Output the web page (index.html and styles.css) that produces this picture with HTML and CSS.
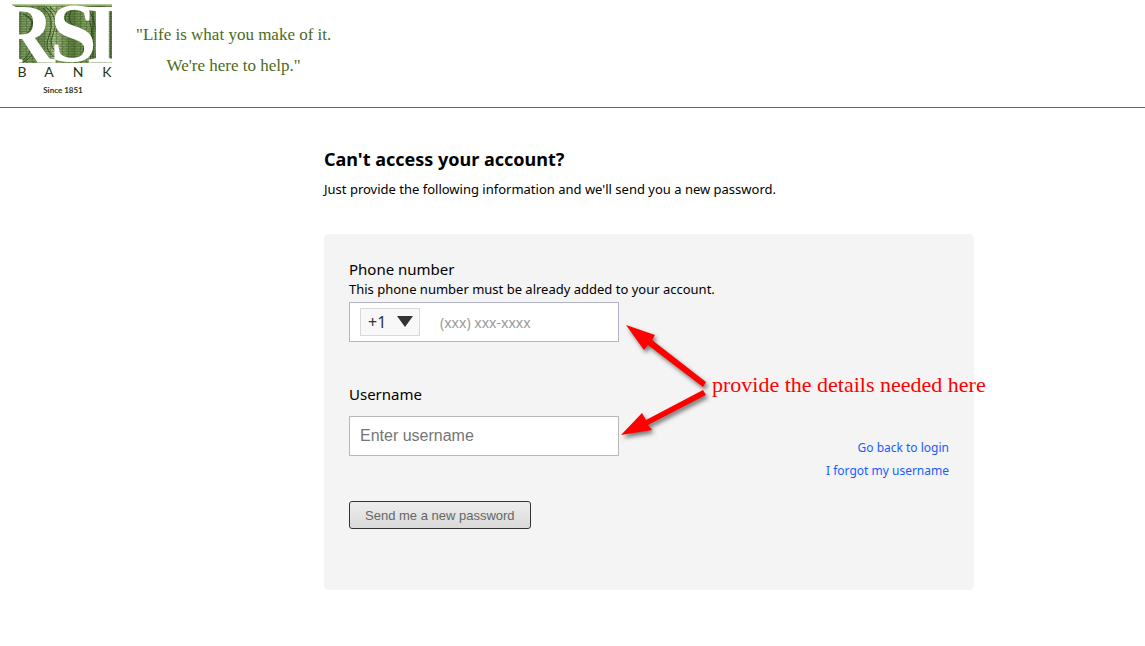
FILE: index.html
```html
<!DOCTYPE html>
<html lang="en">
<head>
<meta charset="utf-8">
<meta name="viewport" content="width=device-width, initial-scale=1">
<title>RSI Bank - Can't access your account?</title>
<link rel="stylesheet" href="styles.css">
</head>
<body>
<header class="site-header">
  <svg class="logo" viewBox="0 0 116 104" role="img" aria-label="RSI Bank, since 1851">
    <defs>
      <linearGradient id="green" x1="0" y1="0" x2="1" y2="0">
        <stop offset="0" stop-color="#5f8245"/>
        <stop offset=".15" stop-color="#86a56a"/>
        <stop offset=".3" stop-color="#6b8d4c"/>
        <stop offset=".42" stop-color="#b0c98c"/>
        <stop offset=".6" stop-color="#5d8041"/>
        <stop offset=".75" stop-color="#8cab68"/>
        <stop offset=".88" stop-color="#587a3e"/>
        <stop offset="1" stop-color="#98b778"/>
      </linearGradient>
      <pattern id="engraving" width="6" height="5" patternUnits="userSpaceOnUse">
        <path d="M0 1Q3 3 6 1M0 4H6M2 0Q4 2 2 5" fill="none" stroke="#2b4619" stroke-width=".7"/>
      </pattern>
      <clipPath id="plate"><path d="M12 4H112V63H19V11Q18 7 12 5Z"/></clipPath>
    </defs>
    <g clip-path="url(#plate)">
      <path d="M12 4H112V63H12Z" fill="url(#green)"/>
      <path d="M12 4H112V63H12Z" fill="url(#engraving)" opacity=".7"/>
      <g fill="none" stroke="#243f16" stroke-width="1" opacity=".8">
        <path d="M19 62Q36 55 28 34M22 63Q42 52 31 36M26 16Q36 20 29 30M23 14Q40 20 27 34"/>
        <path d="M43 8Q56 18 49 36T60 59M46 7Q60 18 53 34T64 56M50 7Q65 20 56 32"/>
        <path d="M67 12Q61 24 74 31T83 53M71 10Q65 24 80 30T88 54M84 8Q96 24 90 62M88 8Q101 28 95 62"/>
        <path d="M108 12V62M111 12V62M93 12V62"/>
      </g>
      <path d="M12 4H112" stroke="#b4c98e" stroke-width="3"/>
    </g>
    <g class="logo-initials">
      <text x="-6" y="63">R</text>
      <text x="50" y="62">S</text>
      <text x="86" y="63">I</text>
    </g>
    <g class="logo-bank">
      <text x="22" y="77">B</text>
      <text x="49" y="77">A</text>
      <text x="78" y="77">N</text>
      <text x="107" y="77">K</text>
    </g>
    <text class="logo-since" x="63" y="93">Since 1851</text>
  </svg>
  <p class="tagline">"Life is what you make of it.<br>We're here to help."</p>
</header>
<main class="recovery">
  <h1 class="title">Can't access your account?</h1>
  <p class="intro">Just provide the following information and we'll send you a new password.</p>
  <form class="card">
    <div class="field">
      <label class="label" for="phone">Phone number</label>
      <p class="hint" id="phone-hint">This phone number must be already added to your account.</p>
      <div class="phone-box">
        <div class="code">
          <select class="code-select" aria-label="Country code"><option>+1</option></select>
          <svg class="code-arrow" viewBox="0 0 16 12" aria-hidden="true"><path d="M0 0H16L8 11Z" fill="#333"/></svg>
        </div>
        <input class="phone-input" id="phone" type="tel" placeholder="(xxx) xxx-xxxx" aria-describedby="phone-hint">
      </div>
    </div>
    <div class="username-row">
      <div class="field">
        <label class="label" for="username">Username</label>
        <input class="username-input" id="username" type="text" placeholder="Enter username">
      </div>
      <nav class="links">
        <a href="#login">Go back to login</a>
        <a href="#username-help">I forgot my username</a>
      </nav>
    </div>
    <button class="submit" type="button">Send me a new password</button>
    <div class="callout">
      <svg class="callout-arrows" viewBox="0 0 98 130" aria-hidden="true">
        <g fill="#f00">
          <path d="M12 7L41 17L38 22L92 64L89 69L34 27L30 32Z"/>
          <path d="M7 117L28 95L32 102L89 72L92 77L34 107L38 112Z"/>
        </g>
      </svg>
      <span class="callout-text">provide the details needed here</span>
    </div>
  </form>
</main>
</body>
</html>
```
FILE: styles.css
```css
* { box-sizing: border-box; }

body {
  margin: 0;
  background: #fff;
  color: #000;
  font-family: "Noto Sans", sans-serif;
}

h1, p { margin: 0; }

.site-header {
  display: flex;
  align-items: flex-start;
  gap: 20px;
  height: 108px;
  border-bottom: 1px solid #76694b;
}

.logo { width: 116px; height: 104px; }

.logo-initials {
  fill: #fff;
  font: bold 84px "Liberation Serif", serif;
}

.logo-bank {
  fill: #263619;
  font: 14px Lato, sans-serif;
  text-anchor: middle;
}

.logo-since {
  fill: #263619;
  font: bold 8px Lato, sans-serif;
  text-anchor: middle;
}

.tagline {
  padding-top: 19px;
  color: #4a6b1f;
  font: 17px/31px "Liberation Serif", serif;
  text-align: center;
}

.recovery {
  max-width: 974px;
  padding-top: 39px;
  padding-left: 324px;
}

.title { font-size: 18px; line-height: 24px; }

.intro {
  padding-top: 8px;
  font-size: 13px;
  line-height: 20px;
}

.card {
  position: relative;
  margin-top: 35px;
  padding: 25px 25px 61px;
  border-radius: 5px;
  background: #f4f4f4;
}

.label {
  display: block;
  font-size: 15px;
  line-height: 20px;
}

.hint {
  font-size: 13px;
  line-height: 20px;
}

.phone-box {
  display: flex;
  align-items: center;
  gap: 20px;
  width: 270px;
  height: 40px;
  margin-top: 3px;
  padding: 0 10px;
  border: 1px solid #b3b3c6;
  background: #fff;
}

.code { position: relative; width: 60px; height: 28px; }

.code-select {
  appearance: none;
  width: 100%;
  height: 100%;
  padding: 0 7px;
  border: 1px solid #d8d8d8;
  border-radius: 0;
  background: #f8f8f8;
  color: #333;
  font: 16px "Noto Sans", sans-serif;
}

.code-arrow {
  position: absolute;
  top: 8px;
  right: 7px;
  width: 16px;
  height: 12px;
  pointer-events: none;
}

.phone-input {
  flex: 1;
  min-width: 0;
  padding: 0;
  border: 0;
  background: transparent;
  font: 14px "Noto Sans", sans-serif;
}

.phone-input::placeholder { color: #999; }

.username-row {
  display: flex;
  justify-content: space-between;
  margin-top: 42px;
}

.username-input {
  width: 270px;
  height: 40px;
  margin-top: 12px;
  padding: 0 10px;
  border: 1px solid #b8b8b8;
  font: 16px "Liberation Sans", sans-serif;
}

.username-input::placeholder { color: #757575; }

.links {
  display: flex;
  flex-direction: column;
  padding-top: 52px;
  font-size: 12px;
  line-height: 23px;
  text-align: right;
}

.links a { color: #1a5cff; text-decoration: none; }

.submit {
  height: 28px;
  margin-top: 19px;
  padding: 0 15px;
  border: 1px solid #333;
  border-radius: 3px;
  background: linear-gradient(#ededed, #dadada);
  color: #666;
  font: 13px "Liberation Sans", sans-serif;
}

.callout {
  position: absolute;
  top: 84px;
  left: 290px;
  display: flex;
  align-items: center;
  color: #f00;
  font: 22px/26px "Liberation Serif", serif;
  white-space: nowrap;
  pointer-events: none;
}

.callout-text { padding-top: 4px; }

.callout-arrows {
  width: 98px;
  height: 130px;
  filter: drop-shadow(2px 3px 2px #777);
}
```
